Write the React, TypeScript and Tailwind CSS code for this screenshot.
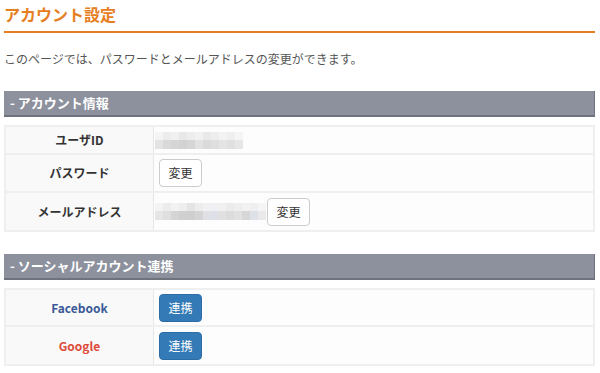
import React from "react";

const font = { fontFamily: '"Noto Sans CJK JP", "Noto Sans", sans-serif' };

function Blur({ w, cells }: { w: number; cells: string[] }) {
  return (
    <div className="flex flex-col" style={{ width: w }}>
      <div className="flex h-[8px]">
        {cells.slice(0, cells.length / 2).map((c, i) => (
          <div key={i} className="flex-1" style={{ background: c }} />
        ))}
      </div>
      <div className="flex h-[9px]">
        {cells.slice(cells.length / 2).map((c, i) => (
          <div key={i} className="flex-1" style={{ background: c }} />
        ))}
      </div>
    </div>
  );
}

const idCells = [
  "#f4f4f4", "#ececec", "#f0f0f0", "#e8e8e8", "#ededed", "#f1f1f1", "#e9e9e9", "#eeeeee", "#f3f3f3", "#efefef", "#f5f5f5",
  "#e3e3e3", "#d9d9d9", "#d5d5d5", "#d2d2d2", "#d6d6d6", "#e2e2e2", "#dadada", "#dedede", "#e4e4e4", "#e0e0e0", "#e6e6e6",
];
const mailCells = [
  "#f3f3f3", "#ececec", "#f2f2f2", "#eeeeee", "#e4e4e4", "#ededed", "#f1f1f3", "#eef0f3", "#f0f0f0", "#ebebeb", "#eeeeee", "#f2f2f2", "#efefef", "#f4f4f4",
  "#e5e5e5", "#dfdfdf", "#d5d5d5", "#d0d0d0", "#cfcfcf", "#d4d4d4", "#dfe1e5", "#dde0e6", "#e0e0e0", "#dcdcdc", "#e1e1e1", "#d7d7d7", "#dde1e8", "#e9e9e9",
];

function SectionHeader({ children }: { children: React.ReactNode }) {
  return (
    <div className="h-[26px] bg-[#8d919d] border-b-2 border-r border-[#6e727c] flex items-center pl-[6px] text-white text-[13px] font-bold">
      {children}
    </div>
  );
}

function Row({ label, labelClass, h, children, last }: { label: string; labelClass?: string; h: number; children: React.ReactNode; last?: boolean }) {
  return (
    <div className={`flex ${last ? "" : "border-b-2 border-[#efefef]"}`} style={{ height: h }}>
      <div className={`w-[148px] shrink-0 bg-[#f9f9f9] border-r border-[#e6e6e6] flex items-center justify-center text-[12px] font-bold ${labelClass ?? "text-[#333]"}`}>
        {label}
      </div>
      <div className="flex-1 bg-[#fdfdfd] flex items-center pl-[5px]">{children}</div>
    </div>
  );
}

function Btn({ children }: { children: React.ReactNode }) {
  return (
    <div className="w-[43px] h-[28px] rounded-[4px] border border-[#cccccc] bg-white flex items-center justify-center text-[12px] text-[#333]">
      {children}
    </div>
  );
}

function BlueBtn({ children }: { children: React.ReactNode }) {
  return (
    <div className="w-[43px] h-[28px] rounded-[4px] bg-[#337ab7] border border-[#2e6da4] flex items-center justify-center text-[12px] text-white">
      {children}
    </div>
  );
}

export default function App() {
  return (
    <div className="w-[600px] h-[373px] bg-white overflow-hidden" style={font}>
      <div className="pl-[4px] pr-[5px]">
        <div className="h-[33px] border-b-2 border-[#e67e22] flex items-center">
          <h1 className="text-[16px] font-bold text-[#e67e22] leading-none -mt-[3px]">アカウント設定</h1>
        </div>
        <p className="mt-[17px] text-[12px] text-[#555] leading-[18px]">このページでは、パスワードとメールアドレスの変更ができます。</p>
        <div className="mt-[23px]">
          <SectionHeader>- アカウント情報</SectionHeader>
        </div>
        <div className="mt-[8px] border-2 border-[#efefef]">
          <Row label="ユーザID" h={28}>
            <div className="-ml-[4px]"><Blur w={88} cells={idCells} /></div>
          </Row>
          <Row label="パスワード" h={38}>
            <Btn>変更</Btn>
          </Row>
          <Row label="メールアドレス" h={37} last>
            <div className="-ml-[4px] flex items-center gap-[1px]">
              <Blur w={111} cells={mailCells} />
              <Btn>変更</Btn>
            </div>
          </Row>
        </div>
        <div className="mt-[22px]">
          <SectionHeader>- ソーシャルアカウント連携</SectionHeader>
        </div>
        <div className="mt-[8px] border-2 border-[#efefef]">
          <Row label="Facebook" labelClass="text-[#3b5998]" h={37}>
            <BlueBtn>連携</BlueBtn>
          </Row>
          <Row label="Google" labelClass="text-[#dd4b39]" h={37} last>
            <BlueBtn>連携</BlueBtn>
          </Row>
        </div>
      </div>
    </div>
  );
}
